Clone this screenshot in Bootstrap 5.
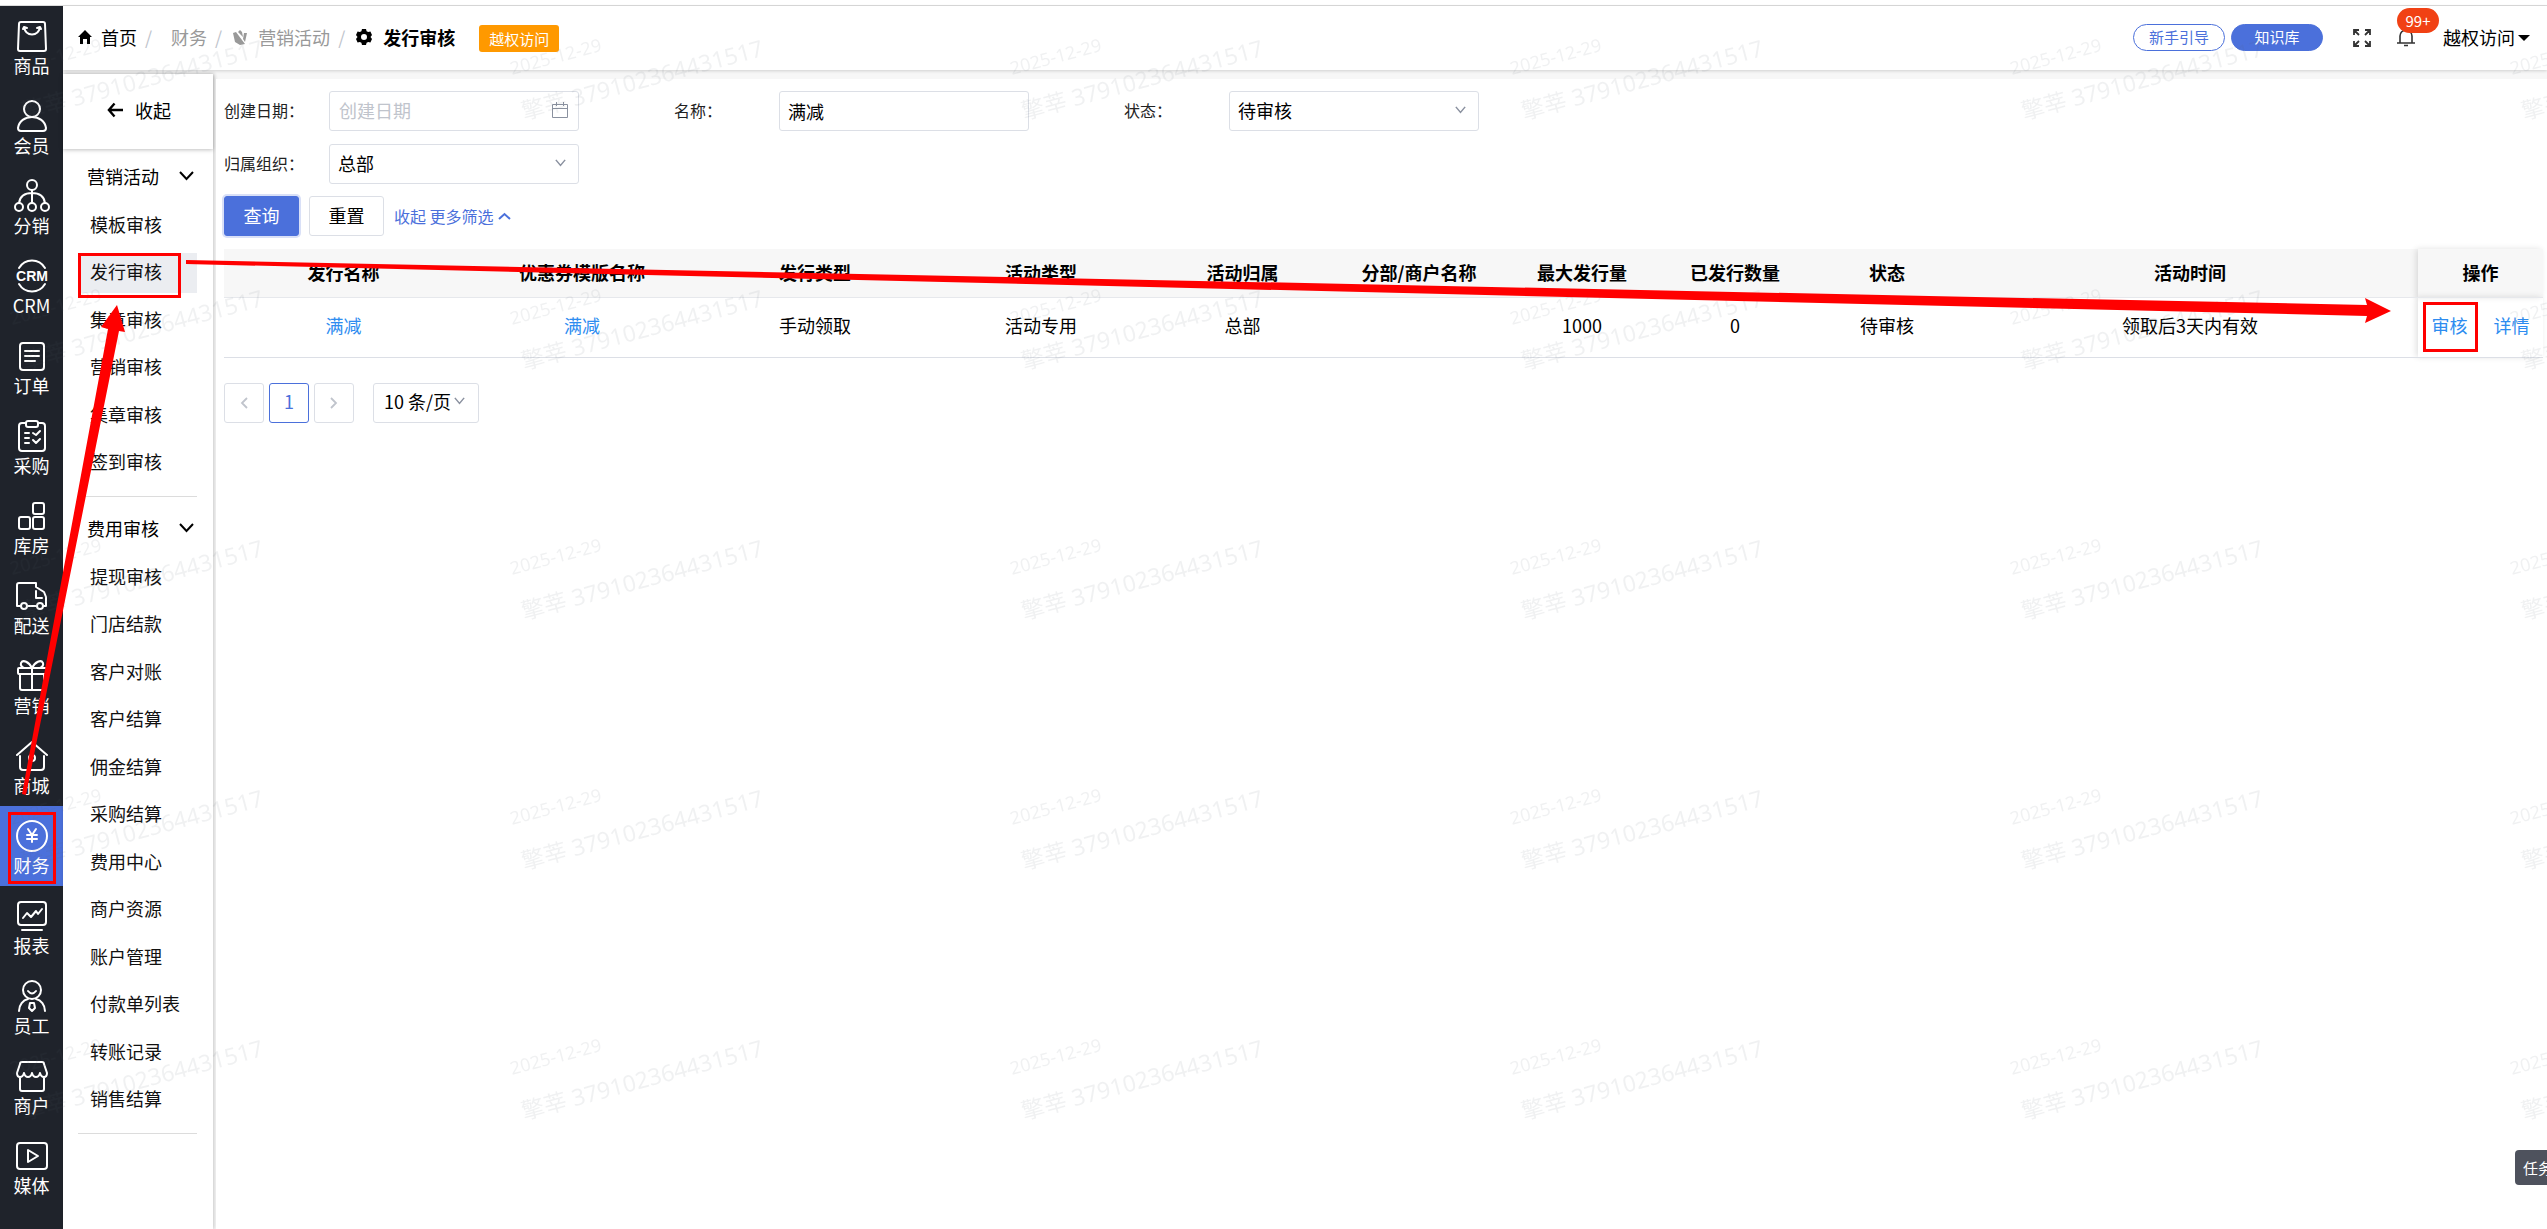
<!DOCTYPE html>
<html lang="zh-CN">
<head>
<meta charset="utf-8">
<meta name="viewport" content="width=device-width, initial-scale=1">
<title>发行审核</title>
<link href="https://cdn.jsdelivr.net/npm/bootstrap@5.3.0/dist/css/bootstrap.min.css" rel="stylesheet">
<style>
:root{--brand:#4b70db;--line:#dcdfe6;--rail:#1f232b}
body{font-family:"Noto Sans CJK SC",sans-serif;font-size:18px;line-height:26px;color:#000;background:#fff;position:relative;overflow-x:hidden}
a{text-decoration:none}
.shell{min-height:100vh;padding-top:5px}
.shell-body{border-top:1px solid #dcdcdc}
.rail{width:63px;background:var(--rail);flex:none}
.rail a{display:block;height:80px;padding-top:12px;color:#fff;text-align:center;white-space:nowrap;line-height:22px}
.rail a.active{background:var(--brand)}
.rail svg{display:block;width:36px;height:36px;margin:0 auto;fill:none;stroke:#fff;stroke-width:2;stroke-linejoin:round;stroke-linecap:round}
.topbar{height:64px;background:#fff;box-shadow:0 1px 3px rgba(0,0,0,.16);padding:0 17px 2px 15px;position:relative;z-index:2}
.crumbs{color:#999}
.crumbs a{color:#999}
.crumbs .dark,.crumbs a.dark{color:#000}
.crumbs svg{margin-right:11px}
.crumbs svg.home{margin-right:9px}
.crumbs li+li::before{content:"/";color:#c0c4cc;margin:0 11px 0 8px}
.crumbs li.bare::before{margin-right:19px}
.crumbs li{display:flex;align-items:center}
.tag-warn{background:#ff9900;color:#fff;font-size:15px;line-height:27px;padding:0 10px;border-radius:3px;margin:2px 0 0 24px}
.tools{padding-top:1px}
.pill{width:92px;height:27px;font-size:15px;line-height:24px;padding:0 0 1px;border:1px solid var(--brand);border-radius:14px;color:var(--brand);background:#fff}
.pill.solid{background:var(--brand);color:#fff;margin-left:6px}
.ico-btn{padding:0;border:0;background:none;line-height:0;position:relative;margin-left:26px}
.pill+.ico-btn{margin-left:30px}
.count{position:absolute;left:0;top:-21px;width:42px;height:25px;border-radius:13px;background:#f14114;color:#fff;font-size:15px;line-height:25px}
.user-btn{border:0;background:none;padding:0 0 2px;color:#000;line-height:26px;margin-left:28px}
.user-btn::after{content:"";display:inline-block;border:6px solid transparent;border-top-color:#000;border-bottom:0;margin-left:3px;vertical-align:4px}
.work{background:#f7f7f7}
.body-col{min-width:0}
.side{width:150px;flex:none;margin-top:4px;background:#fff;box-shadow:1px 0 4px rgba(0,0,0,.2)}
.side-top{height:75px;box-shadow:0 1px 4px rgba(0,0,0,.25);padding:0 0 4px 2px}
.side-top button{border:0;background:none;padding:0;gap:12px;color:#000}
.side section{margin:0 16px 0 15px;border-bottom:1px solid #dcdcdc;padding:8px 0 13px}
.side section+section{padding-top:12px}
.side .group-head{border:0;background:none;color:#000;padding:0 0 2px;margin:0 0 0 9px;height:40px;width:107px}
.side ul{padding-top:9px;margin:0}
.side li a{display:block;color:#111;line-height:36px;padding:0 0 4px 12px;white-space:nowrap}
.side li{margin-bottom:7px}
.side li:nth-child(even){margin-bottom:8px}
.side li:last-child{margin-bottom:0}
.side li a.active{background:#ebedf1}
.pane{margin-top:9px;margin-left:3px;background:#fff;padding:12px 4px 24px 8px;min-width:0}
.filters{display:flex;flex-wrap:wrap;gap:13px 0}
.field{width:450px;display:flex;align-items:center}
.field label{width:105px;font-size:16px;color:#222;padding-bottom:2px}
.ctl{width:250px;height:40px;border:1px solid var(--line);border-radius:3px;padding:0 8px 1px;font-size:18px;line-height:26px;color:#000;box-shadow:none}
.ctl::placeholder{color:#c0c4cc;opacity:1}
.ctl.form-select{padding-bottom:2px;--bs-form-select-bg-img:url("data:image/svg+xml,%3csvg xmlns='http://www.w3.org/2000/svg' viewBox='0 0 14 14'%3e%3cpath d='M2 2l5 6 5-6' fill='none' stroke='%238a919f' stroke-width='1.6'/%3e%3c/svg%3e");background-size:13px 13px;background-position:right 11px center}
.date-wrap{position:relative}
.date-wrap svg{position:absolute;right:11px;top:11px}
.date-wrap .ctl{padding:0 9px 3px}
.actions{margin-top:12px;gap:10px}
.act{width:75px;height:40px;border-radius:3px;border:1px solid var(--line);background:#fff;color:#000;padding:0 0 3px;font-size:18px}
.act.main{background:var(--brand);border-color:var(--brand);color:#fff;box-shadow:0 0 0 2px #d9e0f7}
.more{font-size:16px;color:var(--brand)}
.grid-table{margin:13px 0 0;table-layout:fixed;width:100%;text-align:center}
.grid-table th,.grid-table td{padding:0 0 2px;border-bottom:1px solid #e6e8ec;vertical-align:middle;white-space:nowrap;color:#000}
.grid-table th{height:48px;background:#f7f7f7;font-weight:700}
.grid-table td{height:60px;padding-bottom:4px;border-bottom-color:#dcdfe6}
.grid-table td a{color:#2d8cf0}
.grid-table .pin{box-shadow:-2px 0 6px rgba(0,0,0,.12)}
.grid-table .pin a+a{margin-left:26px}
.w1{width:239px}.w2{width:238px}.w3{width:228px}.w4{width:224px}.w5{width:179px}.w6{width:174px}.w7{width:152px}.w8{width:154px}.w9{width:150px}.w10{width:456px}.w11{width:125px}
.pager{margin-top:25px;gap:5px}
.pager .page-link{width:40px;height:40px;padding:0;border:1px solid var(--line);border-radius:3px;display:flex;align-items:center;justify-content:center;color:#c0c4cc;background:#fff}
.pager .page-link.on{border-color:var(--brand);color:var(--brand);padding-bottom:3px}
.pager .ctl{width:106px;padding:0 10px 4px;margin-left:14px;background-position:right 12px center}
.task-tab{position:absolute;right:-16px;top:1150px;height:35px;width:48px;padding:0 8px;border:0;border-radius:4px 0 0 4px;background:#4e525d;color:#fff;font-size:15px;text-align:left;white-space:nowrap;z-index:3}
.overlay-layer{position:absolute;inset:0;width:100%;height:100%;pointer-events:none;z-index:5;overflow:hidden}
.overlay-layer .wm{fill:#555b66;fill-opacity:.085;font-family:"Noto Sans","Noto Sans CJK SC",sans-serif}
</style>
</head>
<body>
<div class="shell d-flex flex-column">
 <div class="shell-body d-flex flex-fill">
  <nav class="rail" aria-label="主导航">
   <a href="#"><svg viewBox="0 0 36 36"><path d="M7 4h22q2 0 2 2l1 25q0 2-2 2H6q-2 0-2-2L5 6q0-2 2-2z"/><path d="M10 9c2 10 14 10 16 0M9 11l1-2 3 1M23 10l3-1 1 2"/></svg>商品</a>
   <a href="#"><svg viewBox="0 0 36 36"><circle cx="18" cy="11" r="8"/><path d="M7 33h22q3 0 3-3c-1-7-7-11-14-11S5 23 4 30q0 3 3 3z"/></svg>会员</a>
   <a href="#"><svg viewBox="0 0 36 36"><circle cx="18" cy="7" r="5"/><circle cx="5" cy="29" r="4"/><circle cx="18" cy="29" r="4"/><circle cx="31" cy="29" r="4"/><path d="M18 12v13M5 25c1-7 6-10 13-10s12 3 13 10"/></svg>分销</a>
   <a href="#"><svg viewBox="0 0 36 36"><path d="M5 10C11 0 25 0 31 10M5 26c6 10 20 10 26 0"/><text x="18" y="23" text-anchor="middle" font-family="Liberation Sans, sans-serif" font-weight="700" font-size="14" fill="#fff" stroke="none">CRM</text></svg>CRM</a>
   <a href="#"><svg viewBox="0 0 36 36"><rect x="6" y="5" width="24" height="27" rx="3"/><path d="M11 13h14M11 18h14M11 23h10"/></svg>订单</a>
   <a href="#"><svg viewBox="0 0 36 36"><path d="M12 5H8q-3 0-3 3v22q0 3 3 3h20q3 0 3-3V8q0-3-3-3h-4"/><rect x="12" y="3" width="12" height="6" rx="2"/><path d="M11 15h4M11 20h4M11 25h4M19 15l3 2 4-4M19 22l3 3 4-4"/></svg>采购</a>
   <a href="#"><svg viewBox="0 0 36 36"><rect x="19" y="5" width="11" height="11" rx="2"/><rect x="5" y="19" width="11" height="12" rx="2"/><rect x="19" y="19" width="11" height="12" rx="2"/></svg>库房</a>
   <a href="#"><svg viewBox="0 0 36 36"><path d="M6 28H3V7q0-2 2-2h17v4l8 5 2 5v9h-2M14 28h8M22 13v7h6"/><circle cx="10" cy="28" r="3"/><circle cx="26" cy="28" r="3"/></svg>配送</a>
   <a href="#"><svg viewBox="0 0 36 36"><rect x="4" y="10" width="28" height="6" rx="1"/><path d="M6 16v14q0 2 2 2h20q2 0 2-2V16M18 10v22M18 10C15 4 9 1 7 5q-1 3 3 5M18 10c3-6 9-9 11-5q1 3-3 5"/></svg>营销</a>
   <a href="#"><svg viewBox="0 0 36 36"><path d="M3 17L18 4l15 13M6 18v11q0 3 3 3h18q3 0 3-3V18"/><circle cx="18" cy="20" r="3"/></svg>商城</a>
   <a href="#" class="active" aria-current="page"><svg viewBox="0 0 36 36"><circle cx="18" cy="18" r="15"/><path d="M14 11l4 6 4-6M18 17v7M13 17h10M13 21h10"/></svg>财务</a>
   <a href="#"><svg viewBox="0 0 36 36"><rect x="4" y="4" width="28" height="23" rx="3"/><path d="M9 20l4-5 4 4 5-6 2 3 4-5M8 32h20"/></svg>报表</a>
   <a href="#"><svg viewBox="0 0 36 36"><circle cx="18" cy="12" r="9"/><path d="M14 13q4 5 8 0M5 33c0-6 4-11 9-12M31 33c0-6-4-11-9-12M16 25h4l1 5-3 3-3-3z"/></svg>员工</a>
   <a href="#"><svg viewBox="0 0 36 36"><path d="M8 4h20q2 0 2 2l3 9q0 4-3 4t-4-4q-1 4-4 4t-4-4q-1 4-4 4t-4-4q-1 4-4 4t-3-4l3-9q0-2 2-2zM6 20v11q0 2 2 2h20q2 0 2-2V20"/></svg>商户</a>
   <a href="#"><svg viewBox="0 0 36 36"><rect x="3" y="5" width="30" height="26" rx="3"/><path d="M14 12v12l10-6z"/></svg>媒体</a>
  </nav>
  <div class="body-col flex-fill d-flex flex-column">
   <header class="topbar d-flex align-items-center justify-content-between">
    <div class="d-flex align-items-center">
     <ol class="crumbs list-unstyled d-flex m-0">
      <li><svg class="home" width="14" height="14" viewBox="0 0 14 14"><path d="M7 0l7 7h-2v7H9V9H5v5H2V7H0z"/></svg><a href="#" class="dark">首页</a></li>
      <li class="bare"><a href="#">财务</a></li>
      <li><svg width="14" height="15" viewBox="0 0 14 15" fill="#999"><path d="M0 3l3-1 9 12-5 1-5-3zM5 2l2-2 2 2 1 5zM14 3l-2 9-2-3 1-6z"/></svg><a href="#">营销活动</a></li>
      <li><svg width="16" height="16" viewBox="0 0 16 16"><path fill-rule="evenodd" d="M6 0h4l.6 2.2 1.6.9 2.200-.6L16 6l-1.500 2L16 10l-1.600 3.500-2.200-.6-1.600.9L10 16H6l-.6-2.200-1.600-.9-2.200.6L0 10l1.500-2L0 6l1.600-3.500 2.200.6 1.600-.9zM8 5a3 3 0 100 6 3 3 0 000-6z"/></svg><strong class="dark">发行审核</strong></li>
     </ol>
     <span class="tag-warn">越权访问</span>
    </div>
    <div class="tools d-flex align-items-center">
     <button type="button" class="pill">新手引导</button>
     <button type="button" class="pill solid">知识库</button>
     <button type="button" class="ico-btn" aria-label="全屏"><svg width="18" height="18" viewBox="0 0 18 18" fill="none" stroke="#333" stroke-width="1.800"><path d="M1 6V1h5M1 1l5 5M12 1h5v5M17 1l-5 5M1 12v5h5M1 17l5-5M17 12v5h-5M17 17l-5-5"/></svg></button>
     <button type="button" class="ico-btn" aria-label="消息"><svg width="18" height="18" viewBox="0 0 18 18" fill="none" stroke="#333" stroke-width="1.600"><path d="M3 14V7a6 6 0 0112 0v7M0 14h18M7 16.500h4"/></svg><span class="count">99+</span></button>
     <button type="button" class="user-btn">越权访问</button>
    </div>
   </header>
   <div class="work d-flex flex-fill">
    <aside class="side">
     <div class="side-top d-flex align-items-center justify-content-center"><button type="button" class="d-flex align-items-center"><svg width="16" height="16" viewBox="0 0 17 16" fill="none" stroke="#000" stroke-width="2.500"><path d="M17 8H2M8 1L2 8l6 7"/></svg>收起</button></div>
     <section>
      <button type="button" class="group-head d-flex align-items-center justify-content-between">营销活动<svg width="15" height="10" viewBox="0 0 15 10" fill="none" stroke="#000" stroke-width="2"><path d="M1 1l6.500 7L14 1"/></svg></button>
      <ul class="list-unstyled">
       <li><a href="#">模板审核</a></li><li><a href="#" class="active">发行审核</a></li><li><a href="#">集章审核</a></li><li><a href="#">营销审核</a></li><li><a href="#">集章审核</a></li><li><a href="#">签到审核</a></li>
      </ul>
     </section>
     <section>
      <button type="button" class="group-head d-flex align-items-center justify-content-between">费用审核<svg width="15" height="10" viewBox="0 0 15 10" fill="none" stroke="#000" stroke-width="2"><path d="M1 1l6.500 7L14 1"/></svg></button>
      <ul class="list-unstyled">
       <li><a href="#">提现审核</a></li><li><a href="#">门店结款</a></li><li><a href="#">客户对账</a></li><li><a href="#">客户结算</a></li><li><a href="#">佣金结算</a></li><li><a href="#">采购结算</a></li><li><a href="#">费用中心</a></li><li><a href="#">商户资源</a></li><li><a href="#">账户管理</a></li><li><a href="#">付款单列表</a></li><li><a href="#">转账记录</a></li><li><a href="#">销售结算</a></li>
      </ul>
     </section>
    </aside>
    <main class="pane flex-fill">
     <form>
      <div class="filters">
       <div class="field"><label for="f-date">创建日期：</label><div class="date-wrap"><input id="f-date" type="text" class="form-control ctl" placeholder="创建日期"><svg width="16" height="16" viewBox="0 0 16 16" fill="none" stroke="#8a919f"><path d="M.5 2.500h15v13H.5zM.5 6.500h15M4.500 0v4M11.500 0v4"/></svg></div></div>
       <div class="field"><label for="f-name">名称：</label><input id="f-name" type="text" class="form-control ctl" value="满减"></div>
       <div class="field"><label for="f-state">状态：</label><select id="f-state" class="form-select ctl"><option>待审核</option></select></div>
       <div class="w-100 d-flex"><div class="field"><label for="f-org">归属组织：</label><select id="f-org" class="form-select ctl"><option>总部</option></select></div></div>
      </div>
      <div class="actions d-flex align-items-center">
       <button type="button" class="act main">查询</button>
       <button type="button" class="act">重置</button>
       <a href="#" class="more d-flex align-items-center gap-1">收起 更多筛选<svg width="13" height="8" viewBox="0 0 13 8" fill="none" stroke="#4b70db" stroke-width="2"><path d="M1 7l5.500-5L12 7"/></svg></a>
      </div>
     </form>
     <table class="table grid-table">
      <colgroup><col class="w1"><col class="w2"><col class="w3"><col class="w4"><col class="w5"><col class="w6"><col class="w7"><col class="w8"><col class="w9"><col class="w10"><col class="w11"></colgroup>
      <thead><tr><th>发行名称</th><th>优惠券模版名称</th><th>发行类型</th><th>活动类型</th><th>活动归属</th><th>分部/商户名称</th><th>最大发行量</th><th>已发行数量</th><th>状态</th><th>活动时间</th><th class="pin">操作</th></tr></thead>
      <tbody><tr><td><a href="#">满减</a></td><td><a href="#">满减</a></td><td>手动领取</td><td>活动专用</td><td>总部</td><td></td><td>1000</td><td>0</td><td>待审核</td><td>领取后3天内有效</td><td class="pin"><a href="#">审核</a><a href="#">详情</a></td></tr></tbody>
     </table>
     <div class="pager d-flex align-items-center">
      <button type="button" class="page-link" aria-label="上一页"><svg width="8" height="12" viewBox="0 0 8 12" fill="none" stroke="#c0c4cc" stroke-width="1.800"><path d="M7 1L2 6l5 5"/></svg></button>
      <button type="button" class="page-link on">1</button>
      <button type="button" class="page-link" aria-label="下一页"><svg width="8" height="12" viewBox="0 0 8 12" fill="none" stroke="#c0c4cc" stroke-width="1.800"><path d="M1 1l5 5-5 5"/></svg></button>
      <select class="form-select ctl" aria-label="每页条数"><option>10 条/页</option></select>
     </div>
    </main>
   </div>
  </div>
 </div>
</div>
<button type="button" class="task-tab">任务</button>
<svg class="overlay-layer" aria-hidden="true">
 <defs><pattern id="wm" width="500" height="250" patternUnits="userSpaceOnUse">
  <text class="wm" font-size="18" transform="translate(12 75) rotate(-15)">2025-12-29</text>
  <text class="wm" font-size="23" transform="translate(24 120) rotate(-15)">擎莘 379102364431517</text>
 </pattern></defs>
 <rect width="100%" height="100%" fill="url(#wm)"/>
 <g fill="#f00"><path d="M22 794L108 329 101 327 117 305 125 332 119 331 26 795z"/><path d="M186 260L2367 305 2365 298 2391 311 2365 323 2367 316 186 264z"/></g>
 <g fill="none" stroke="#f00" stroke-width="3"><rect x="79.500" y="254.500" width="100" height="42"/><rect x="9.500" y="813.500" width="45" height="69"/><rect x="2424.500" y="303.500" width="52" height="47"/></g>
</svg>
<script src="https://cdn.jsdelivr.net/npm/bootstrap@5.3.0/dist/js/bootstrap.bundle.min.js"></script>
</body>
</html>
